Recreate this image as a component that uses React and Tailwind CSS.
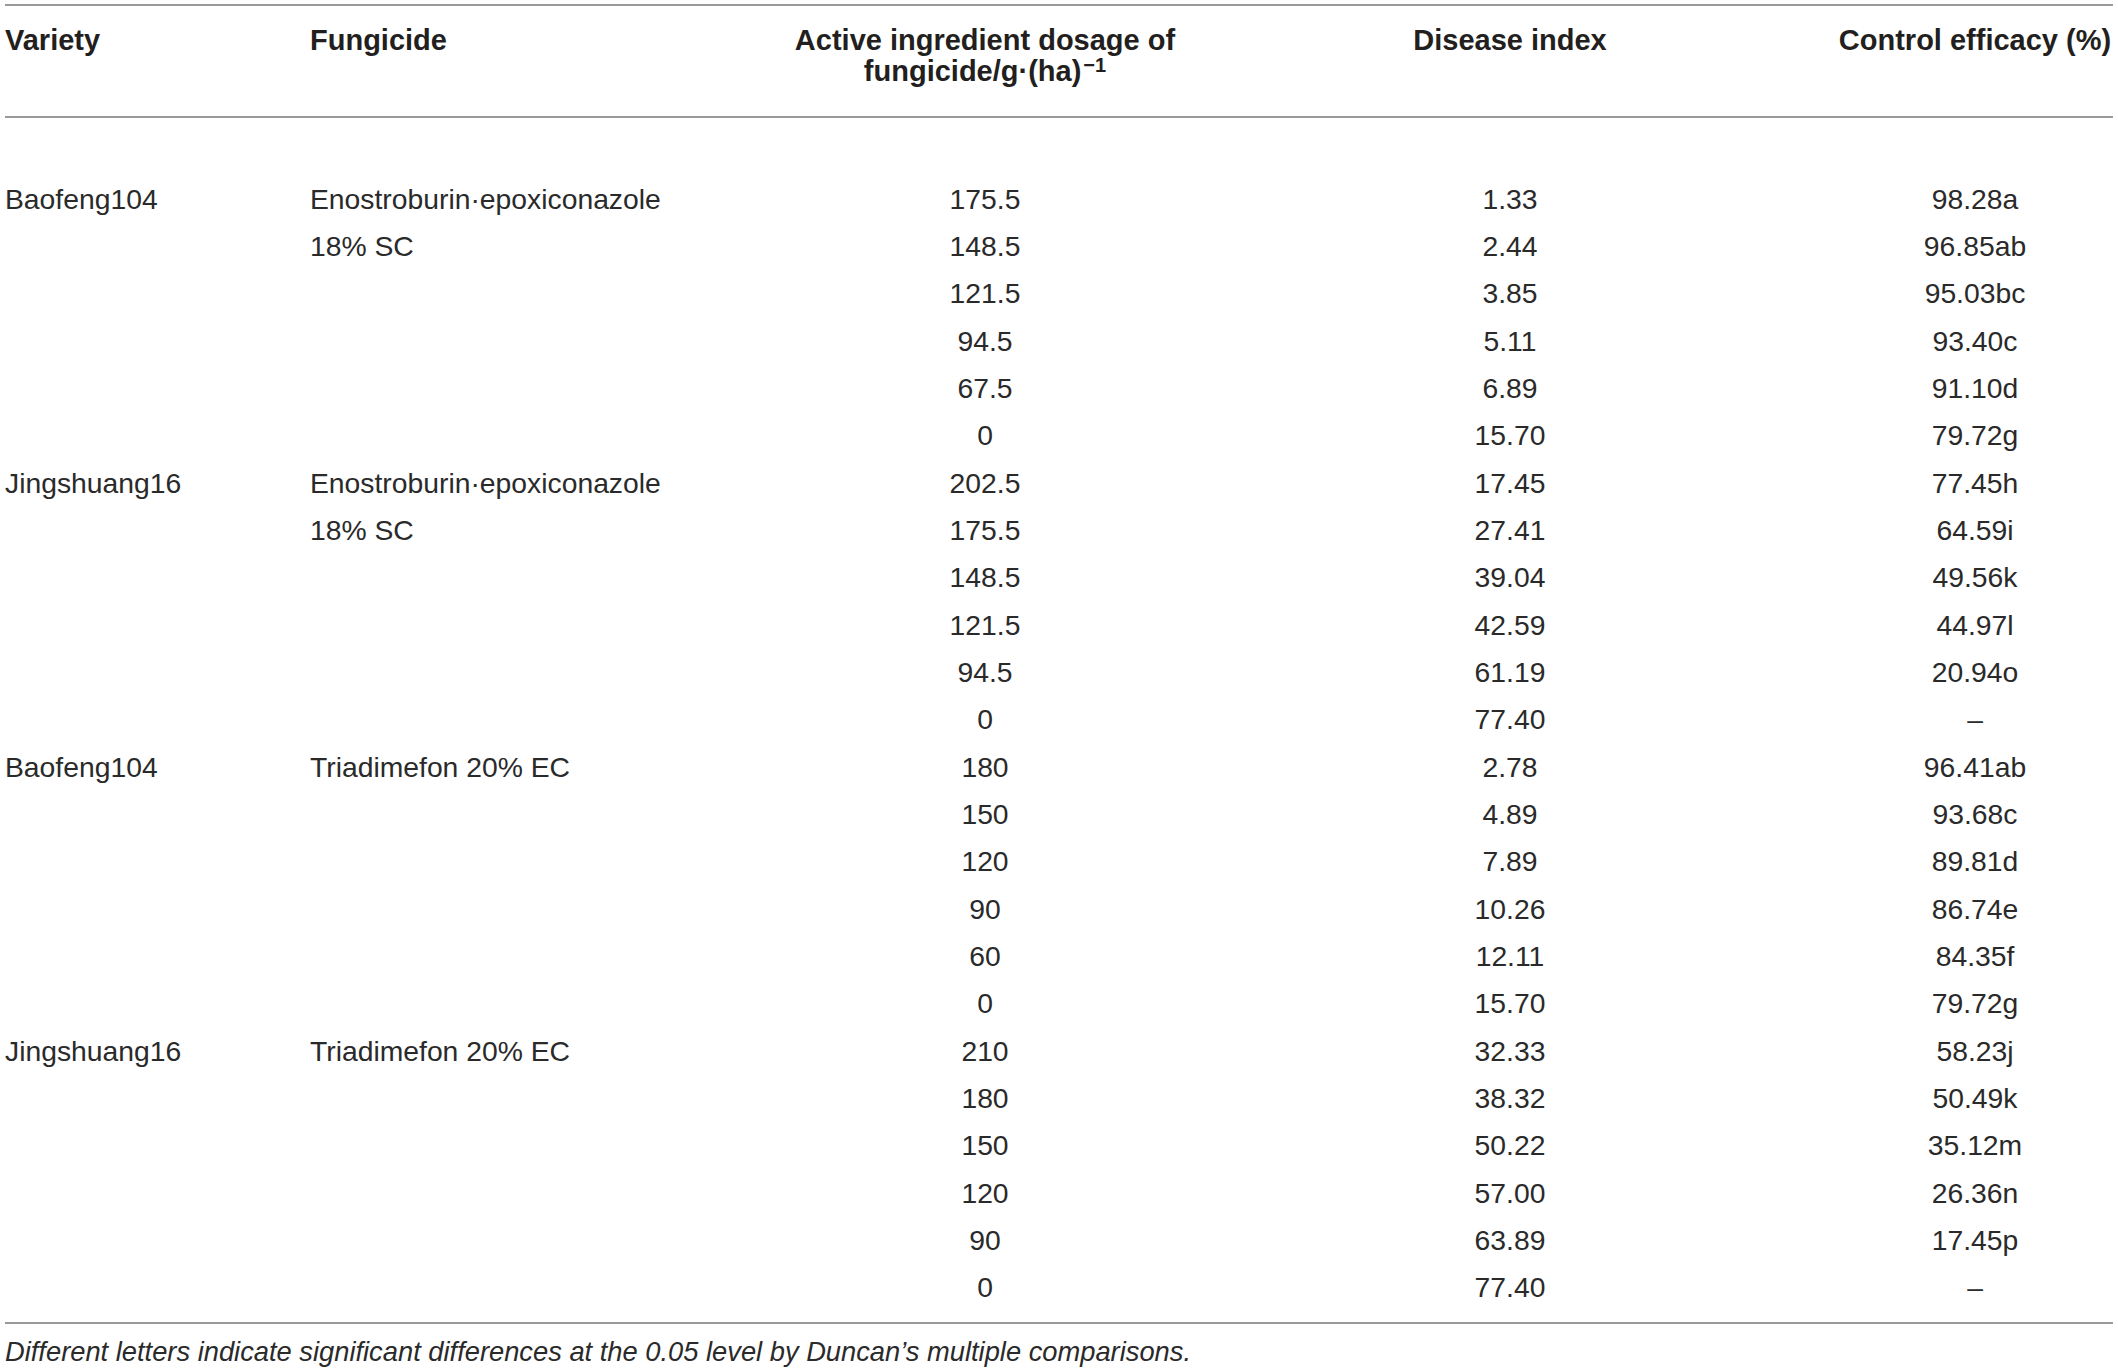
import React from "react";

const rows = [
  ["Baofeng104", "Enostroburin·epoxiconazole", "175.5", "1.33", "98.28a"],
  ["", "18% SC", "148.5", "2.44", "96.85ab"],
  ["", "", "121.5", "3.85", "95.03bc"],
  ["", "", "94.5", "5.11", "93.40c"],
  ["", "", "67.5", "6.89", "91.10d"],
  ["", "", "0", "15.70", "79.72g"],
  ["Jingshuang16", "Enostroburin·epoxiconazole", "202.5", "17.45", "77.45h"],
  ["", "18% SC", "175.5", "27.41", "64.59i"],
  ["", "", "148.5", "39.04", "49.56k"],
  ["", "", "121.5", "42.59", "44.97l"],
  ["", "", "94.5", "61.19", "20.94o"],
  ["", "", "0", "77.40", "–"],
  ["Baofeng104", "Triadimefon 20% EC", "180", "2.78", "96.41ab"],
  ["", "", "150", "4.89", "93.68c"],
  ["", "", "120", "7.89", "89.81d"],
  ["", "", "90", "10.26", "86.74e"],
  ["", "", "60", "12.11", "84.35f"],
  ["", "", "0", "15.70", "79.72g"],
  ["Jingshuang16", "Triadimefon 20% EC", "210", "32.33", "58.23j"],
  ["", "", "180", "38.32", "50.49k"],
  ["", "", "150", "50.22", "35.12m"],
  ["", "", "120", "57.00", "26.36n"],
  ["", "", "90", "63.89", "17.45p"],
  ["", "", "0", "77.40", "–"],
];

export default function App() {
  return (
    <div
      className="w-[2118px] h-[1372px] bg-white text-[#231f20] pt-[4px] px-[5px]"
      style={{ fontFamily: '"Liberation Sans", Arial, sans-serif' }}
    >
      <div className="border-t-2 border-[#9a9a9a]" />
      <div className="grid grid-cols-[305px_450px_450px_600px_303px] pt-[19px] pb-[26px] text-[29px] leading-[31px] font-bold">
        <div className="whitespace-nowrap">Variety</div>
        <div className="whitespace-nowrap">Fungicide</div>
        <div className="text-center whitespace-nowrap">
          Active ingredient dosage of
          <br />
          fungicide/g·(ha)
          <span className="text-[20px] relative -top-[9px] ml-[2px]">−1</span>
        </div>
        <div className="text-center whitespace-nowrap">Disease index</div>
        <div className="text-center pl-[27px] whitespace-nowrap">Control efficacy (%)</div>
      </div>
      <div className="border-t-2 border-[#9a9a9a]" />
      <div className="h-[57px]" />
      <div className="text-[28.3px] text-[#2a2a2a]">
        {rows.map((r, i) => (
          <div
            key={i}
            className="grid grid-cols-[305px_450px_450px_600px_303px] h-[47.34px] items-center leading-[32px] whitespace-nowrap"
          >
            <div>{r[0]}</div>
            <div>{r[1]}</div>
            <div className="text-center">{r[2]}</div>
            <div className="text-center">{r[3]}</div>
            <div className="text-center pl-[27px]">{r[4]}</div>
          </div>
        ))}
      </div>
      <div className="h-[11px]" />
      <div className="border-t-2 border-[#9a9a9a]" />
      <div className="pt-[11px] text-[27.3px] leading-[34px] italic text-[#2a2a2a]">
        Different letters indicate significant differences at the 0.05 level by Duncan’s multiple comparisons.
      </div>
    </div>
  );
}
